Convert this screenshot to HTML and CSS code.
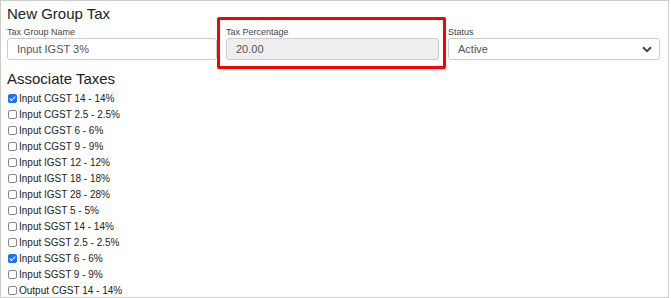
FILE: index.html
```html
<!DOCTYPE html>
<html>
<head>
<meta charset="utf-8">
<title>New Group Tax</title>
<link rel="stylesheet" href="styles.css">
</head>
<body>
	<div id="panel">
		<h3>New Group Tax</h3>
		<div class="fields">
			<div class="field">
				<label for="name">Tax Group Name</label>
				<input type="text" id="name" value="Input IGST 3%">
			</div>
			<div class="field marked">
				<label for="pct">Tax Percentage</label>
				<input type="text" id="pct" value="20.00" readonly>
				<span class="mark"></span>
			</div>
			<div class="field">
				<label for="status">Status</label>
				<div class="select">
					<span>Active</span>
					<svg width="10" height="7" viewBox="0 0 10 7"><path d="M1 1.2 L5 5.2 L9 1.2" fill="none" stroke="#444" stroke-width="2"/></svg>
				</div>
			</div>
		</div>
		<h3 class="assoc">Associate Taxes</h3>
		<ul class="taxes">
			<li><input type="checkbox" id="t1" checked><label for="t1">Input CGST 14 - 14%</label></li>
			<li><input type="checkbox" id="t2"><label for="t2">Input CGST 2.5 - 2.5%</label></li>
			<li><input type="checkbox" id="t3"><label for="t3">Input CGST 6 - 6%</label></li>
			<li><input type="checkbox" id="t4"><label for="t4">Input CGST 9 - 9%</label></li>
			<li><input type="checkbox" id="t5"><label for="t5">Input IGST 12 - 12%</label></li>
			<li><input type="checkbox" id="t6"><label for="t6">Input IGST 18 - 18%</label></li>
			<li><input type="checkbox" id="t7"><label for="t7">Input IGST 28 - 28%</label></li>
			<li><input type="checkbox" id="t8"><label for="t8">Input IGST 5 - 5%</label></li>
			<li><input type="checkbox" id="t9"><label for="t9">Input SGST 14 - 14%</label></li>
			<li><input type="checkbox" id="t10"><label for="t10">Input SGST 2.5 - 2.5%</label></li>
			<li><input type="checkbox" id="t11" checked><label for="t11">Input SGST 6 - 6%</label></li>
			<li><input type="checkbox" id="t12"><label for="t12">Input SGST 9 - 9%</label></li>
			<li><input type="checkbox" id="t13"><label for="t13">Output CGST 14 - 14%</label></li>
		</ul>
	</div>
</body>
</html>
```
FILE: styles.css
```css
body {
	margin: 0;
	background-color: #fff;
	font-family: "Liberation Sans", Arial, sans-serif;
	color: #333;
}
#panel {
	width: 655px;
	height: 296px;
	border: 1px solid #ccc;
	padding: 0 6px;
	overflow: hidden;
}
#panel h3 {
	font-size: 15px;
	font-weight: normal;
	line-height: 18px;
	margin: 4px 0 0 0;
	color: #222;
}
.fields {
	display: grid;
	grid-template-columns: 210px 213px 212px;
	column-gap: 9px;
	margin-top: 4px;
}
.field {
	position: relative;
}
.field label {
	display: block;
	font-size: 9px;
	line-height: 11px;
	color: #444;
}
.field input,
.field .select {
	display: block;
	width: 100%;
	height: 22px;
	box-sizing: border-box;
	border: 1px solid #ccc;
	border-radius: 3px;
	padding: 0 9px;
	font-family: inherit;
	font-size: 11px;
	color: #555;
	background-color: #fff;
	outline: none;
}
.field #pct {
	background-color: #eee;
}
.field .select {
	display: flex;
	align-items: center;
	justify-content: space-between;
	padding: 0 7px 0 9px;
}
/* red annotation box round the percentage field */
.mark {
	position: absolute;
	left: -9px;
	right: -7px;
	top: -10px;
	bottom: -9px;
	border: 3px solid #f00;
	border-radius: 2px;
}
#panel h3.assoc {
	margin-top: 10px;
}
.taxes {
	list-style: none;
	margin: 2px 0 0 0;
	padding: 0;
}
.taxes li {
	display: flex;
	align-items: center;
	height: 16px;
	font-size: 10px;
	color: #222;
}
.taxes input {
	appearance: none;
	-webkit-appearance: none;
	width: 9px;
	height: 9px;
	margin: 0 2px 0 1px;
	border: 1px solid #888;
	border-radius: 2px;
	background-color: #fff;
	position: relative;
}
.taxes input:checked {
	background-color: #1a73e8;
	border-color: #1a73e8;
}
.taxes input:checked:after {
	content: "";
	position: absolute;
	left: 2px;
	top: 0px;
	width: 2px;
	height: 5px;
	border: solid #fff;
	border-width: 0 1.5px 1.5px 0;
	transform: rotate(45deg);
}
```
